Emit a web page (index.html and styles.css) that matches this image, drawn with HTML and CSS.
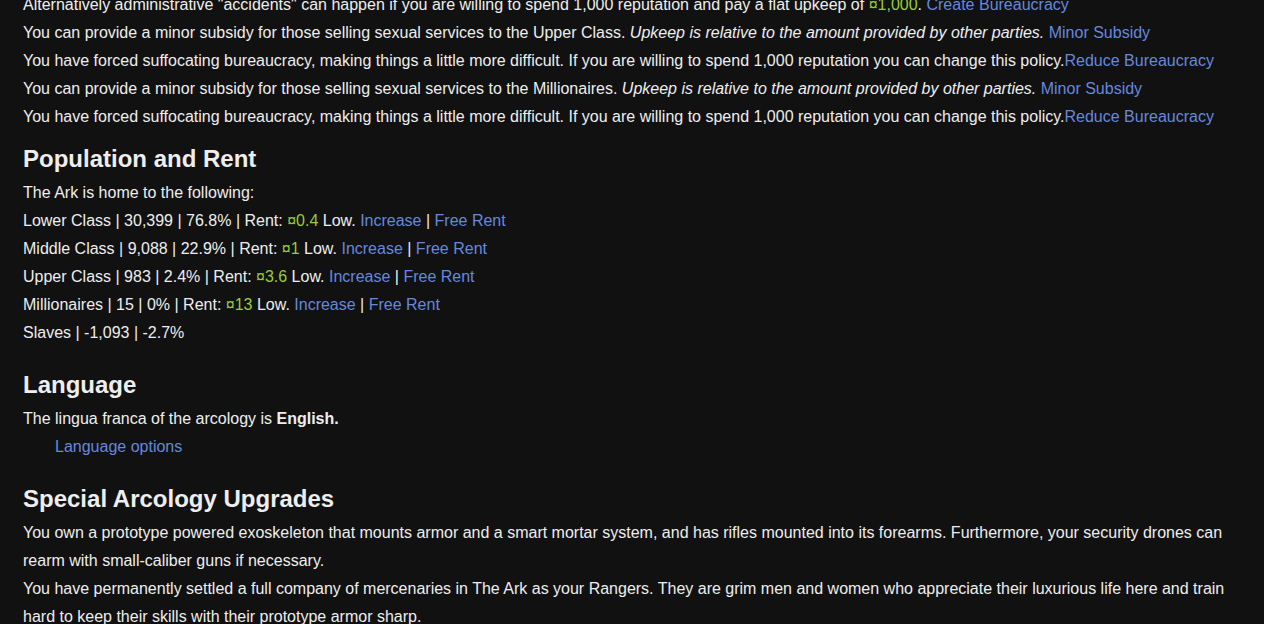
FILE: index.html
```html
<!DOCTYPE html>
<html lang="en">
<head>
<meta charset="UTF-8">
<meta name="viewport" content="width=device-width, initial-scale=1.0">
<title>Arcology Management</title>
<link rel="stylesheet" href="styles.css">
</head>
	<body>
		<div class="passage">

			<div class="policies">
				<div>Alternatively administrative "accidents" can happen if you are willing to spend 1,000 reputation and pay a flat upkeep of <span class="cash">¤1,000</span>. <a href="#">Create Bureaucracy</a></div>
				<div>You can provide a minor subsidy for those selling sexual services to the Upper Class. <i>Upkeep is relative to the amount provided by other parties.</i> <a href="#">Minor Subsidy</a></div>
				<div>You have forced suffocating bureaucracy, making things a little more difficult. If you are willing to spend 1,000 reputation you can change this policy.<a href="#">Reduce Bureaucracy</a></div>
				<div>You can provide a minor subsidy for those selling sexual services to the Millionaires. <i>Upkeep is relative to the amount provided by other parties.</i> <a href="#">Minor Subsidy</a></div>
				<div>You have forced suffocating bureaucracy, making things a little more difficult. If you are willing to spend 1,000 reputation you can change this policy.<a href="#">Reduce Bureaucracy</a></div>
			</div>

			<h2 class="first">Population and Rent</h2>
			<div class="population">
				<div>The Ark is home to the following:</div>
				<div>Lower Class | 30,399 | 76.8% | Rent: <span class="cash">¤0.4</span> Low. <a href="#">Increase</a> | <a href="#">Free Rent</a></div>
				<div>Middle Class | 9,088 | 22.9% | Rent: <span class="cash">¤1</span> Low. <a href="#">Increase</a> | <a href="#">Free Rent</a></div>
				<div>Upper Class | 983 | 2.4% | Rent: <span class="cash">¤3.6</span> Low. <a href="#">Increase</a> | <a href="#">Free Rent</a></div>
				<div>Millionaires | 15 | 0% | Rent: <span class="cash">¤13</span> Low. <a href="#">Increase</a> | <a href="#">Free Rent</a></div>
				<div>Slaves | -1,093 | -2.7%</div>
			</div>

			<h2>Language</h2>
			<div class="language">
				<div>The lingua franca of the arcology is <b>English.</b></div>
				<div class="indent"><a href="#">Language options</a></div>
			</div>

			<h2>Special Arcology Upgrades</h2>
			<div class="upgrades">
				<div>You own a prototype powered exoskeleton that mounts armor and a smart mortar system, and has rifles mounted into its forearms. Furthermore, your security drones can rearm with small-caliber guns if necessary.</div>
				<div>You have permanently settled a full company of mercenaries in The Ark as your Rangers. They are grim men and women who appreciate their luxurious life here and train hard to keep their skills with their prototype armor sharp.</div>
			</div>

		</div>
	</body>
</html>
```

FILE: styles.css
```css
html {
    box-sizing: border-box;
    margin: 0;
    padding: 0;
}

body {
    background-color: #111;
    color: #eee;
    font-family: "Liberation Sans", Arial, sans-serif;
    font-size: 16px;
    line-height: 28px;
    margin: 0;
    overflow: hidden;
}

/* page is scrolled a little, first line sits partly above the top edge */
.passage {
    margin-top: -9px;
    padding: 0 20px 0 23px;
}

a {
    color: #68d;
    text-decoration: none;
    cursor: pointer;
}

a:hover {
    color: #8af;
    text-decoration: underline;
}

.cash {
    color: yellowgreen;
}

h2 {
    font-size: 24px;
    font-weight: bold;
    line-height: 28px;
    margin: 24px 0 6px 0;
}

h2.first {
    margin-top: 14px;
}

.indent {
    padding-left: 32px;
}
```
